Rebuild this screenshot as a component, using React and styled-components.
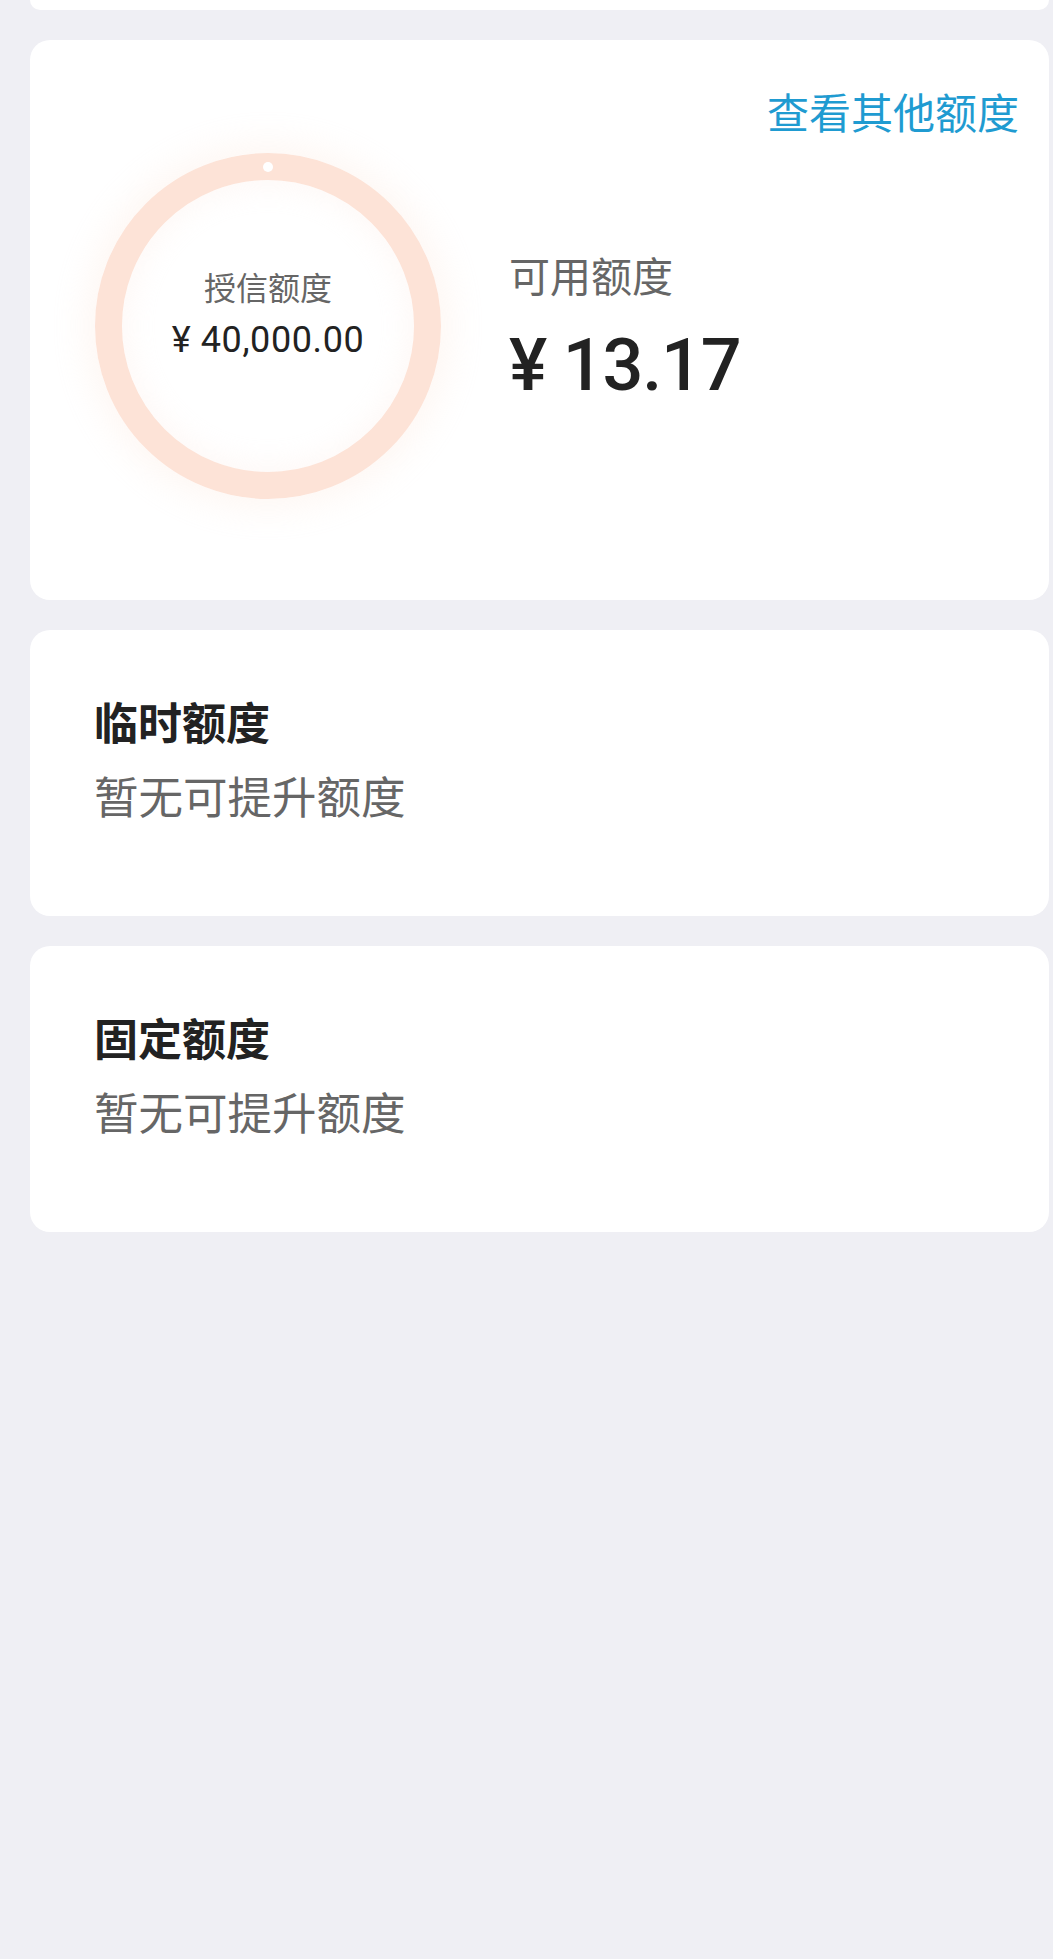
import React from "react";
import styled, { createGlobalStyle } from "styled-components";

const Global = createGlobalStyle`
  html, body { margin: 0; padding: 0; background: #efeff4; }
  body { font-family: Roboto, "Noto Sans CJK SC", sans-serif; }
`;

const Page = styled.div`
  min-height: 1959px;
  box-sizing: border-box;
  padding: 0 4px 0 30px;
  display: flex;
  flex-direction: column;
  gap: 30px;
  background: #efeff4;
`;

const TopStub = styled.div`
  height: 10px;
  background: #fff;
  border-radius: 0 0 20px 20px;
`;

const Card = styled.div`
  background: #fff;
  border-radius: 20px;
  box-sizing: border-box;
  height: ${(p) => p.$h}px;
`;

const QuotaCard = styled(Card)`
  display: flex;
  flex-direction: column;
`;

const LinkRow = styled.div`
  display: flex;
  justify-content: flex-end;
  padding: 46px 30px 0;
`;

const Link = styled.a`
  font-family: "Noto Sans CJK SC", sans-serif;
  font-size: 42px;
  line-height: 50px;
  color: #1f9bd1;
  text-decoration: none;
`;

const Body = styled.div`
  display: flex;
  padding-left: 65px;
  margin-top: 17px;
  gap: 68px;
`;

const Ring = styled.div`
  position: relative;
  width: 346px;
  height: 346px;
  box-sizing: border-box;
  border-radius: 50%;
  border: 27px solid #fde3d7;
  box-shadow: 0 0 34px 10px rgba(253, 228, 216, 0.3),
    inset 0 0 26px 8px rgba(253, 236, 228, 0.3);
  display: flex;
  flex-direction: column;
  align-items: center;
  justify-content: center;
  padding-bottom: 17px;
`;

const Dot = styled.span`
  position: absolute;
  top: -18.5px;
  left: 50%;
  width: 10px;
  height: 10px;
  margin-left: -5px;
  border-radius: 50%;
  background: #fff;
`;

const RingLabel = styled.div`
  font-family: "Noto Sans CJK SC", sans-serif;
  font-size: 32px;
  line-height: 44px;
  color: #666;
`;

const RingValue = styled.div`
  font-size: 36px;
  line-height: 64px;
  letter-spacing: 0.6px;
  color: #222;
`;

const Avail = styled.div`
  display: flex;
  flex-direction: column;
  margin-top: 93px;
`;

const AvailLabel = styled.div`
  font-family: "Noto Sans CJK SC", sans-serif;
  font-size: 41px;
  line-height: 56px;
  color: #666;
`;

const AvailValue = styled.div`
  margin-top: 14px;
  font-size: 72px;
  line-height: 100px;
  font-weight: 500;
  letter-spacing: -1.2px;
  color: #222;
`;

const InfoCard = styled(Card)`
  display: flex;
  flex-direction: column;
  gap: 14px;
  padding: 61px 0 0 64px;
`;

const Title = styled.div`
  font-family: "Noto Sans CJK SC", sans-serif;
  font-size: 44px;
  line-height: 60px;
  font-weight: 700;
  color: #222;
`;

const Sub = styled.div`
  font-family: "Noto Sans CJK SC", sans-serif;
  font-size: 44.5px;
  line-height: 60px;
  color: #666;
`;

const items = [
  { title: "临时额度", sub: "暂无可提升额度" },
  { title: "固定额度", sub: "暂无可提升额度" },
];

export default function App() {
  return (
    <>
      <Global />
      <Page>
        <TopStub />
        <QuotaCard $h={560}>
          <LinkRow>
            <Link>查看其他额度</Link>
          </LinkRow>
          <Body>
            <Ring>
              <Dot />
              <RingLabel>授信额度</RingLabel>
              <RingValue>¥ 40,000.00</RingValue>
            </Ring>
            <Avail>
              <AvailLabel>可用额度</AvailLabel>
              <AvailValue>¥ 13.17</AvailValue>
            </Avail>
          </Body>
        </QuotaCard>
        {items.map((it) => (
          <InfoCard key={it.title} $h={286}>
            <Title>{it.title}</Title>
            <Sub>{it.sub}</Sub>
          </InfoCard>
        ))}
      </Page>
    </>
  );
}
